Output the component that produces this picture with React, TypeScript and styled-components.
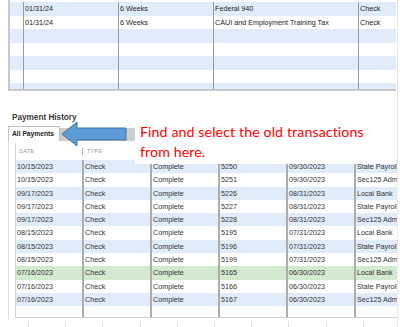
import React from "react";
import styled, { createGlobalStyle } from "styled-components";

const GlobalStyle = createGlobalStyle`
  html, body {
    margin: 0;
    padding: 0;
    background: #fff;
  }
  body {
    font-family: "Liberation Sans", Arial, sans-serif;
    width: 400px;
    height: 327px;
    overflow: hidden;
  }
`;

const Page = styled.div`
  position: relative;
  width: 397px;
  height: 327px;
  overflow: hidden;
  border-right: 1px dotted #d6d6d6;
`;

const TopGrid = styled.div`
  margin-left: 8px;
  width: 386px;
  height: 87px;
  padding-top: 2px;
  border-left: 2px solid #c8c8c8;
  border-bottom: 2px solid #c8c8c8;
  overflow: hidden;
`;

const TopRow = styled.div<{ $shade: boolean }>`
  display: grid;
  grid-template-columns: 13px 95px 95px 145px 38px;
  height: 13.5px;
  background: ${(p) => (p.$shade ? "#e1ecfb" : "#fff")};
`;

const TopCell = styled.div<{ $first?: boolean }>`
  border-left: ${(p) => (p.$first ? "none" : "1px solid #9a9a9a")};
  padding-left: 1px;
  font-size: 7.2px;
  line-height: 13.5px;
  color: #222;
  white-space: nowrap;
  overflow: hidden;
`;

const Section = styled.div`
  margin-left: 8px;
  margin-top: 22px;
`;

const Title = styled.div`
  padding-left: 4px;
  height: 10px;
  font-size: 8.2px;
  line-height: 10px;
  font-weight: bold;
  color: #3a3a3a;
`;

const TabBar = styled.div`
  display: flex;
  align-items: flex-end;
  margin-top: 3px;
  height: 15px;
`;

const Tab = styled.div`
  box-sizing: border-box;
  width: 52px;
  height: 15px;
  padding-left: 3px;
  background: #fff;
  border: 1px solid #c2c2c2;
  border-bottom: none;
  font-size: 6.7px;
  font-weight: bold;
  line-height: 14px;
  color: #222;
`;

const TabFill = styled.div`
  width: 75px;
  height: 13px;
  background: #cdcdcd;
`;

const Panel = styled.div`
  height: 177px;
  padding: 2px 0 0 6px;
  border-left: 1px solid #e2e2e2;
`;

const PayTable = styled.div`
  width: 381px;
  border-left: 1px solid #d2d2d2;
  border-bottom: 1px solid #d2d2d2;
`;

const PayRow = styled.div<{ $bg: string; $height: number }>`
  display: grid;
  grid-template-columns: 66px 68px 68px 68px 68px 43px;
  height: ${(p) => p.$height}px;
  background: ${(p) => p.$bg};
`;

const HeadCell = styled.div<{ $first?: boolean }>`
  position: relative;
  padding-left: ${(p) => (p.$first ? "3px" : "5px")};
  font-size: 5.6px;
  line-height: 17px;
  color: #9a9a9a;
  letter-spacing: 0.2px;
  white-space: nowrap;
  overflow: hidden;

  &::before {
    content: "";
    display: ${(p) => (p.$first ? "none" : "block")};
    position: absolute;
    left: 0;
    top: 5px;
    height: 7px;
    border-left: 1px dotted #777;
  }
`;

const PayCell = styled.div<{ $first?: boolean }>`
  border-left: ${(p) => (p.$first ? "none" : "2px solid #acacac")};
  padding-left: 1px;
  font-size: 7.2px;
  line-height: 13.3px;
  color: #333;
  white-space: nowrap;
  overflow: hidden;
`;

const Footer = styled.div`
  display: grid;
  grid-template-columns: repeat(10, 37.2px);
  margin-top: 1px;
  padding-left: 28px;
  height: 6px;
`;

const Tick = styled.div`
  border-left: 1px solid #dedede;
`;

const Arrow = styled.svg`
  position: absolute;
  left: 59px;
  top: 119px;
`;

const Callout = styled.div`
  position: absolute;
  left: 135px;
  top: 118px;
  box-sizing: border-box;
  width: 261px;
  height: 46px;
  padding: 4px 0 0 5px;
  background: #fff;
  font-family: Lato, "Liberation Sans", sans-serif;
  font-size: 14.2px;
  letter-spacing: 0.1px;
  line-height: 20px;
  color: #ff0000;
`;

const topRows: string[][] = [
  ["", "01/31/24", "6 Weeks", "Federal 940", "Check"],
  ["", "01/31/24", "6 Weeks", "CAUI and Employment Training Tax", "Check"],
  ["", "", "", "", ""],
  ["", "", "", "", ""],
  ["", "", "", "", ""],
  ["", "", "", "", ""],
  ["", "", "", "", ""],
];

// only the first two headings show; the note covers the rest
const headers = ["Date", "Type", "", "", "", ""];

const payments = [
  ["10/15/2023", "Check", "Complete", "5250", "09/30/2023", "State Payroll"],
  ["10/15/2023", "Check", "Complete", "5251", "09/30/2023", "Sec125 Adm"],
  ["09/17/2023", "Check", "Complete", "5226", "08/31/2023", "Local Bank"],
  ["09/17/2023", "Check", "Complete", "5227", "08/31/2023", "State Payroll"],
  ["09/17/2023", "Check", "Complete", "5228", "08/31/2023", "Sec125 Adm"],
  ["08/15/2023", "Check", "Complete", "5195", "07/31/2023", "Local Bank"],
  ["08/15/2023", "Check", "Complete", "5196", "07/31/2023", "State Payroll"],
  ["08/15/2023", "Check", "Complete", "5199", "07/31/2023", "Sec125 Adm"],
  ["07/16/2023", "Check", "Complete", "5165", "06/30/2023", "Local Bank"],
  ["07/16/2023", "Check", "Complete", "5166", "06/30/2023", "State Payroll"],
  ["07/16/2023", "Check", "Complete", "5167", "06/30/2023", "Sec125 Adm"],
];

const SELECTED = 8;

function rowColor(i: number) {
  if (i === SELECTED) return "#d3e9d0";
  return i % 2 === 0 ? "#e1ecfb" : "#fff";
}

export default function App() {
  return (
    <>
      <GlobalStyle />
      <Page>
        <TopGrid>
          {topRows.map((row, i) => (
            <TopRow key={i} $shade={i % 2 === 0}>
              {row.map((text, j) => (
                <TopCell key={j} $first={j === 0}>
                  {text}
                </TopCell>
              ))}
            </TopRow>
          ))}
        </TopGrid>

        <Section>
          <Title>Payment History</Title>
          <TabBar>
            <Tab>All Payments</Tab>
            <TabFill />
          </TabBar>
          <Panel>
            <PayTable>
              <PayRow $bg="#fff" $height={17}>
                {headers.map((h, j) => (
                  <HeadCell key={j} $first={j === 0}>
                    {h.toUpperCase()}
                  </HeadCell>
                ))}
              </PayRow>
              {payments.map((row, i) => (
                <PayRow key={i} $bg={rowColor(i)} $height={13.3}>
                  {row.map((text, j) => (
                    <PayCell key={j} $first={j === 0}>
                      {text}
                    </PayCell>
                  ))}
                </PayRow>
              ))}
              <PayRow $bg="#fff" $height={10.5}>
                {headers.map((_, j) => (
                  <PayCell key={j} $first={j === 0} />
                ))}
              </PayRow>
            </PayTable>
          </Panel>
        </Section>

        <Footer>
          {Array.from({ length: 10 }).map((_, i) => (
            <Tick key={i} />
          ))}
        </Footer>

        <Arrow width="70" height="30" viewBox="0 0 70 30">
          <polygon
            points="3,15 18,3 18,9 67,9 67,21 18,21 18,27"
            fill="#5b9bd5"
            stroke="#41719c"
            strokeWidth="1"
            strokeLinejoin="miter"
          />
        </Arrow>

        <Callout>
          Find and select the old transactions
          <br />
          from here.
        </Callout>
      </Page>
    </>
  );
}
